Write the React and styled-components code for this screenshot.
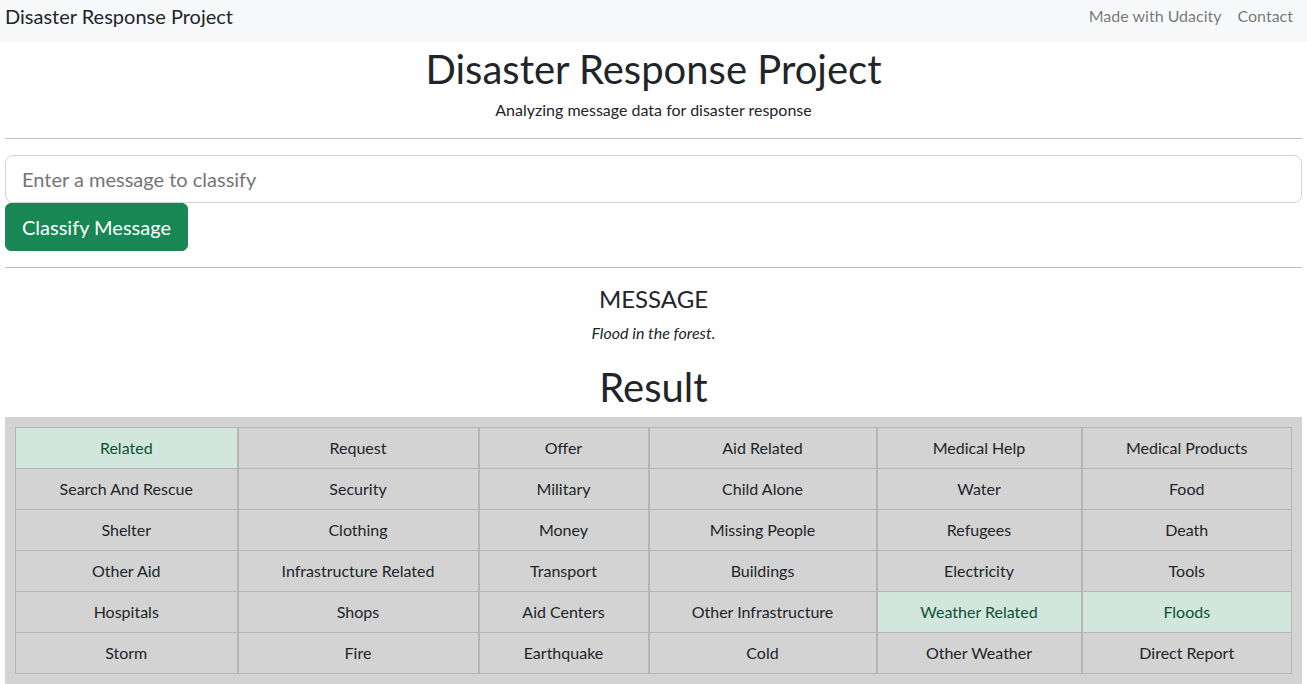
import React, {useState} from 'react';
import styled, {createGlobalStyle} from "styled-components";

const GlobalStyle = createGlobalStyle`
  * {
    box-sizing: border-box;
  }

  body {
    margin: 0;
    font-family: Lato, "Open Sans", "Noto Sans", sans-serif;
    color: #212529;
    background: #fff;
  }
`

const Navbar = styled.nav`
  height: 42px;
  background-color: #f8f9fa;
  display: flex;
  align-items: flex-start;
  justify-content: space-between;
  padding: 1px 6px 0 5px;
`

const Brand = styled.a`
  font-size: 20px;
  color: #212529;
  text-decoration: none;
  line-height: 30px;
`

const NavLinks = styled.ul`
  display: flex;
  list-style: none;
  margin: 0;
  padding: 0;
`

const NavLink = styled.a`
  display: block;
  padding: 3px 8px;
  font-size: 16px;
  line-height: 24px;
  color: rgba(0, 0, 0, 0.55);
  text-decoration: none;
`

const Page = styled.main`
  padding: 0 5px;
`

const Header = styled.header`
  text-align: center;
  padding-top: 3px;
`

const Title = styled.h1`
  font-size: 40px;
  font-weight: 400;
  line-height: 1.2;
  margin: 0 0 5px;
`

const Subtitle = styled.p`
  font-size: 16px;
  line-height: 24px;
  margin: 0;
`

const Rule = styled.hr`
  margin: 16px 0;
  border: 0;
  border-top: 1px solid rgba(0, 0, 0, 0.25);
`

const Form = styled.form`
  display: flex;
  flex-direction: column;
  align-items: flex-start;
`

const Input = styled.input`
  width: 100%;
  height: 48px;
  padding: 8px 16px;
  font-size: 20px;
  font-family: inherit;
  color: #212529;
  border: 1px solid #ced4da;
  border-radius: 8px;
  outline: none;

  ::placeholder {
    color: #6c757d;
  }
`

const Button = styled.button`
  height: 48px;
  width: 183px;
  padding: 8px 16px;
  font-size: 20px;
  font-family: inherit;
  color: #fff;
  background-color: #198754;
  border: 1px solid #198754;
  border-radius: 6px;
  cursor: pointer;
`

const MessageBlock = styled.section`
  text-align: center;
`

const MessageLabel = styled.h4`
  font-size: 24px;
  font-weight: 400;
  line-height: 29px;
  margin: 0 0 8px;
`

const MessageText = styled.p`
  font-style: italic;
  font-size: 16px;
  line-height: 24px;
  margin: 0;
`

const ResultTitle = styled.h1`
  font-size: 40px;
  font-weight: 400;
  line-height: 48px;
  margin: 18px 0 6px;
  text-align: center;
`

const Panel = styled.div`
  background-color: #d3d3d3;
  padding: 10px;
`

const Table = styled.table`
  width: 100%;
  border-collapse: collapse;
  table-layout: fixed;
  border-top: 1px solid #b5b5b5;
  border-left: 1px solid #b5b5b5;
`

const Col = styled.col`
  width: ${({w}) => w}px;
`

const Cell = styled.td`
  height: 41px;
  padding: 8px;
  font-size: 16px;
  line-height: 24px;
  text-align: center;
  white-space: nowrap;
  border-right: 2px solid #b5b5b5;
  border-bottom: 1px solid #b5b5b5;
  background-color: ${({active}) => active ? '#d1e7dd' : 'transparent'};
  color: ${({active}) => active ? '#0f5132' : '#212529'};

  &:last-child {
    border-right-width: 1px;
  }
`

const colWidths = [222, 241, 170, 228, 205, 210]

const categories = [
    ['Related', 'Request', 'Offer', 'Aid Related', 'Medical Help', 'Medical Products'],
    ['Search And Rescue', 'Security', 'Military', 'Child Alone', 'Water', 'Food'],
    ['Shelter', 'Clothing', 'Money', 'Missing People', 'Refugees', 'Death'],
    ['Other Aid', 'Infrastructure Related', 'Transport', 'Buildings', 'Electricity', 'Tools'],
    ['Hospitals', 'Shops', 'Aid Centers', 'Other Infrastructure', 'Weather Related', 'Floods'],
    ['Storm', 'Fire', 'Earthquake', 'Cold', 'Other Weather', 'Direct Report'],
]

const positive = ['Related', 'Weather Related', 'Floods']

const App = () => {
    const [query, setQuery] = useState('')

    return (
        <>
            <GlobalStyle/>
            <Navbar>
                <Brand href="#">Disaster Response Project</Brand>
                <NavLinks>
                    <li><NavLink href="#">Made with Udacity</NavLink></li>
                    <li><NavLink href="#">Contact</NavLink></li>
                </NavLinks>
            </Navbar>
            <Page>
                <Header>
                    <Title>Disaster Response Project</Title>
                    <Subtitle>Analyzing message data for disaster response</Subtitle>
                </Header>
                <Rule/>
                <Form onSubmit={e => e.preventDefault()}>
                    <Input
                        value={query}
                        onChange={e => setQuery(e.target.value)}
                        placeholder="Enter a message to classify"/>
                    <Button type="submit">Classify Message</Button>
                </Form>
                <Rule/>
                <MessageBlock>
                    <MessageLabel>MESSAGE</MessageLabel>
                    <MessageText>Flood in the forest.</MessageText>
                </MessageBlock>
                <ResultTitle>Result</ResultTitle>
                <Panel>
                    <Table>
                        <colgroup>
                            {colWidths.map((w, i) => <Col key={i} w={w}/>)}
                        </colgroup>
                        <tbody>
                        {categories.map((row, r) => (
                            <tr key={r}>
                                {row.map(name => (
                                    <Cell key={name} active={positive.includes(name)}>{name}</Cell>
                                ))}
                            </tr>
                        ))}
                        </tbody>
                    </Table>
                </Panel>
            </Page>
        </>
    );
};

export default App;
